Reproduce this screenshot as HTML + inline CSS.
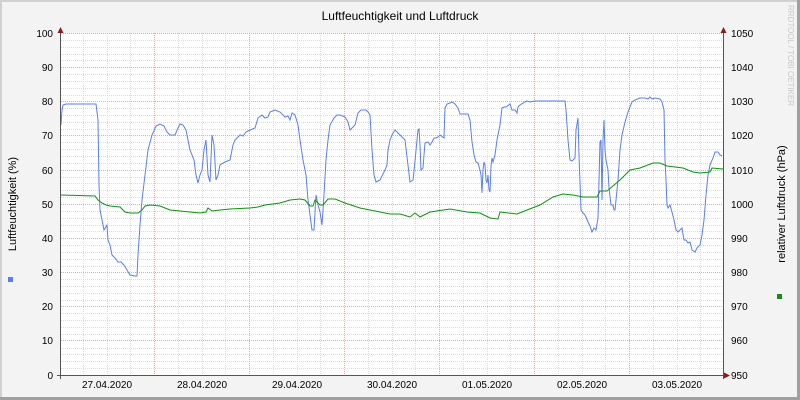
<!DOCTYPE html>
<html><head><meta charset="utf-8"><style>
html,body{margin:0;padding:0;width:800px;height:400px;overflow:hidden;background:#f3f3f3}
svg{display:block}
text{font-family:"Liberation Sans","DejaVu Sans",sans-serif;font-size:10px;fill:#000}
</style></head><body>
<svg width="800" height="400" viewBox="0 0 800 400" xmlns="http://www.w3.org/2000/svg">
<rect x="0" y="0" width="800" height="400" fill="#f3f3f3"/>
<rect x="0" y="0" width="800" height="2" fill="#d0d0d0"/>
<rect x="0" y="0" width="2" height="400" fill="#d0d0d0"/>
<rect x="797" y="0" width="3" height="400" fill="#a0a0a0"/>
<rect x="0" y="397" width="800" height="3" fill="#a0a0a0"/>
<rect x="61" y="33" width="662" height="342" fill="#fff"/>
<g shape-rendering="crispEdges">
<path stroke="#dcdcdc" stroke-dasharray="1,1" fill="none" d="M83.5 33V375M107.5 33V375M130.5 33V375M178.5 33V375M202.5 33V375M225.5 33V375M273.5 33V375M297.5 33V375M320.5 33V375M368.5 33V375M392.5 33V375M415.5 33V375M463.5 33V375M487.5 33V375M510.5 33V375M558.5 33V375M582.5 33V375M605.5 33V375M653.5 33V375M677.5 33V375M700.5 33V375
M61 368.5H723M61 361.5H723M61 354.5H723M61 348.5H723M61 334.5H723M61 327.5H723M61 320.5H723M61 313.5H723M61 300.5H723M61 293.5H723M61 286.5H723M61 279.5H723M61 266.5H723M61 259.5H723M61 252.5H723M61 245.5H723M61 231.5H723M61 225.5H723M61 218.5H723M61 211.5H723M61 197.5H723M61 190.5H723M61 183.5H723M61 177.5H723M61 163.5H723M61 156.5H723M61 149.5H723M61 142.5H723M61 129.5H723M61 122.5H723M61 115.5H723M61 108.5H723M61 95.5H723M61 88.5H723M61 81.5H723M61 74.5H723M61 60.5H723M61 54.5H723M61 47.5H723M61 40.5H723"/>
<path stroke="#e6a8a8" stroke-dasharray="1,1" fill="none" d="M61 33.5H723M61 67.5H723M61 101.5H723M61 135.5H723M61 170.5H723M61 204.5H723M61 238.5H723M61 272.5H723M61 306.5H723M61 340.5H723M154.5 33V375M249.5 33V375M344.5 33V375M439.5 33V375M534.5 33V375M629.5 33V375"/>
</g>
<polyline fill="none" stroke="#5b7fe8" stroke-width="1" points="61,125 62,110 63,105 66,104 70,104 75,104 96,104 97,112 98,120 99,185 100,210 102,220 104,230 107,225 108,240 110,245 112,255 115,258 118,262 121,262 124,265 127,270 130,275 135,276 137,276 138,255 140,225 142,200 145,175 148,150 152,135 156,126 160,124 164,126 167,132 170,135 175,135 178,128 180,124 183,125 186,130 188,140 190,150 194,160 196,175 198,183 200,175 202,170 204,150 206,140 208,175 210,182 212,135 214,145 216,180 218,175 220,165 225,162 230,160 233,145 235,140 240,135 243,136 246,132 250,130 255,128 258,118 262,115 265,118 268,117 270,112 275,110 280,112 283,115 285,117 288,116 290,120 292,113 295,115 298,125 300,140 303,160 306,175 308,200 310,215 312,230 314,230 316,195 318,205 320,212 322,225 324,195 326,160 328,140 330,125 334,118 337,115 340,115 345,117 348,122 350,130 352,128 355,125 358,113 361,110 366,110 368,112 370,115 372,150 374,175 376,182 380,180 385,170 387,165 388,150 390,140 392,135 395,130 400,135 405,140 410,182 413,180 414,171 415,161 417,140 418,130 419,129 420,145 421,170 423,168 424,155 425,143 428,142 430,145 432,142 434,138 436,138 438,137 440,135 444,138 445,108 447,104 450,103 452,102 455,104 458,108 460,114 464,114 468,114 470,120 472,142 474,155 476,162 478,163 480,170 481,175 482,193 483,170 484,162 485,165 486,180 487,183 488,175 489,190 490,192 491,166 492,158 493,162 495,155 497,140 500,125 502,108 504,107 506,107 510,104 512,110 515,110 517,113 518,107 520,105 525,102 527,101 530,102 535,101 565,101 566,110 567,125 568,140 570,160 572,161 575,158 576,130 578,118 579,155 581,210 583,213 585,215 588,222 590,226 592,232 594,228 596,230 598,218 600,142 601,140 602,200 603,140 604,120 605,150 606,160 608,170 609,188 611,205 613,205 614,210 615,210 618,180 620,150 622,135 625,122 628,112 632,102 635,100 640,98 645,98 648,99 650,97 652,99 655,98 660,99 662,102 664,110 665,160 666,180 667,205 668,208 670,205 672,212 674,220 676,230 678,232 680,230 682,228 684,240 686,240 688,243 690,242 692,250 695,252 697,248 700,245 702,235 704,220 706,195 708,175 710,165 713,158 715,152 718,152 720,155 722,156"/>
<polyline fill="none" stroke="#109010" stroke-width="1" points="61,195 95,196 98,200 102,203 106,205 110,206 120,207 125,212 130,213 138,213 142,210 145,206 150,205 160,206 170,210 180,211 190,212 200,213 206,212 208,208 212,211 220,210 230,209 250,208 258,207 265,205 280,203 290,200 300,199 305,200 310,206 313,206 315,200 320,205 323,205 328,199 335,199 345,203 360,208 370,210 380,212 390,214 398,214 400,214 410,217 415,213 420,217 430,212 450,209 467,212 480,213 490,218 498,219 500,212 517,214 527,210 540,205 553,197 563,194 573,195 583,197 597,197 600,191 607,191 620,180 630,170 640,168 653,163 660,163 667,166 683,168 693,172 700,173 710,172 712,168 723,169"/>
<g shape-rendering="crispEdges">
<line x1="60.5" y1="30" x2="60.5" y2="379" stroke="#555"/>
<line x1="723.5" y1="30" x2="723.5" y2="379" stroke="#555"/>
<line x1="57" y1="375.5" x2="728" y2="375.5" stroke="#555"/>
</g>
<polygon points="57.5,33 60.5,27 63.5,33" fill="#8b1a1a"/>
<polygon points="720.5,33 723.5,27 726.5,33" fill="#8b1a1a"/>
<polygon points="724,372.5 730,375.5 724,378.5" fill="#8b1a1a"/>
<text x="400" y="20" text-anchor="middle" style="font-size:12px">Luftfeuchtigkeit und Luftdruck</text>
<g text-anchor="end">
<text x="53" y="37">100</text><text x="53" y="71">90</text><text x="53" y="105">80</text><text x="53" y="139">70</text><text x="53" y="174">60</text><text x="53" y="208">50</text><text x="53" y="242">40</text><text x="53" y="276">30</text><text x="53" y="310">20</text><text x="53" y="344">10</text><text x="53" y="379">0</text>
</g>
<g>
<text x="731" y="37">1050</text><text x="731" y="71">1040</text><text x="731" y="105">1030</text><text x="731" y="139">1020</text><text x="731" y="174">1010</text><text x="731" y="208">1000</text><text x="731" y="242">990</text><text x="731" y="276">980</text><text x="731" y="310">970</text><text x="731" y="344">960</text><text x="731" y="379">950</text>
</g>
<g text-anchor="middle">
<text x="107" y="388">27.04.2020</text><text x="202" y="388">28.04.2020</text><text x="297" y="388">29.04.2020</text><text x="392" y="388">30.04.2020</text><text x="487" y="388">01.05.2020</text><text x="582" y="388">02.05.2020</text><text x="677" y="388">03.05.2020</text>
</g>
<text transform="translate(16,204) rotate(-90)" text-anchor="middle" style="font-size:11px">Luftfeuchtigkeit (%)</text>
<text transform="translate(785,204) rotate(-90)" text-anchor="middle" style="font-size:11px">relativer Luftdruck (hPa)</text>
<text transform="translate(788,5) rotate(90)" style="font-size:8px;fill:#c8c8c8">RRDTOOL / TOBI OETIKER</text>
<rect x="8" y="277" width="5" height="5" fill="#5b7fe8"/>
<rect x="777" y="294" width="5" height="5" fill="#109010"/>
</svg>
</body></html>
